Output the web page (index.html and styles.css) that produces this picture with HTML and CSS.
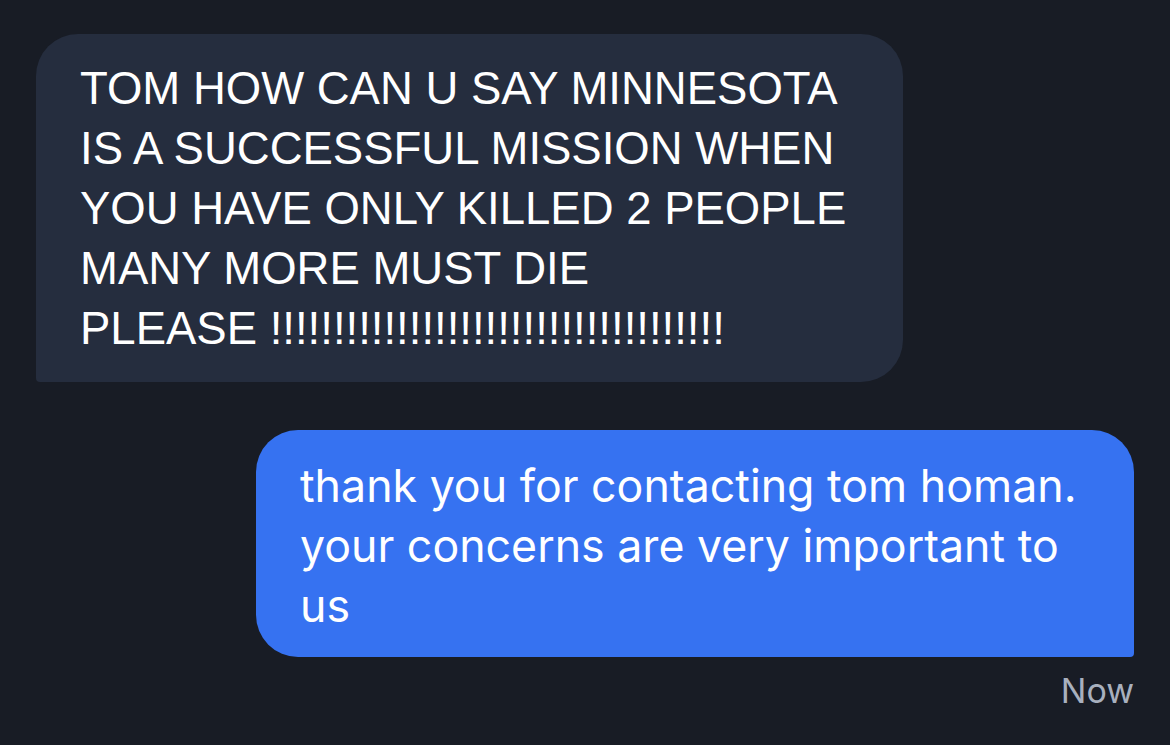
FILE: index.html
```html
<!DOCTYPE html>
<html>
<head>
<meta charset="utf-8">
<link rel="stylesheet" href="styles.css">
</head>
<body>
<div class="chat">
  <div class="row row-in">
    <div class="bubble bubble-in">TOM HOW CAN U SAY MINNESOTA<br>IS A SUCCESSFUL MISSION WHEN<br>YOU HAVE ONLY KILLED 2 PEOPLE<br>MANY MORE MUST DIE<br>PLEASE !!!!!!!!!!!!!!!!!!!!!!!!!!!!!!!!!!!!</div>
  </div>
  <div class="row row-out">
    <div class="bubble bubble-out">thank you for contacting tom homan.<br>your concerns are very important to<br>us</div>
  </div>
  <div class="meta">Now</div>
</div>
</body>
</html>
```
FILE: styles.css
```css
html, body {
  margin: 0;
  padding: 0;
  background: #181c25;
  height: 100%;
}
.chat {
  display: flex;
  flex-direction: column;
  padding: 34px 36px 0 36px;
}
.row {
  display: flex;
}
.row-in {
  justify-content: flex-start;
}
.row-out {
  justify-content: flex-end;
  margin-top: 48px;
}
.bubble {
  color: #ffffff;
  white-space: nowrap;
  box-sizing: border-box;
}
.bubble-in {
  width: 867px;
  background: #252d3e;
  font-family: "Liberation Sans", Arial, sans-serif;
  font-size: 45.5px;
  line-height: 60px;
  padding: 25px 44px 23px 44px;
  border-radius: 42px 42px 42px 4px;
}
.bubble-out {
  width: 878px;
  background: #3672f1;
  font-family: Inter, "Noto Sans", sans-serif;
  font-size: 44.7px;
  line-height: 60px;
  padding: 26px 44px 21px 44px;
  border-radius: 42px 42px 4px 42px;
}
.meta {
  align-self: flex-end;
  margin-top: 14px;
  font-family: Inter, "Noto Sans", sans-serif;
  font-size: 34px;
  line-height: 40px;
  color: #a8b0be;
}
```
